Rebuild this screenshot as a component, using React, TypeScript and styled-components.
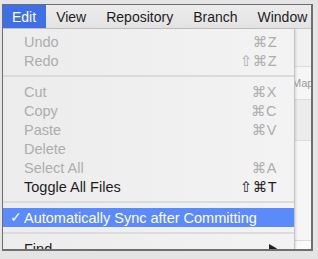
import React from 'react';
import styled, { createGlobalStyle } from 'styled-components';

type Item =
  | { kind: 'item'; label: string; shortcut?: string; disabled?: boolean; checked?: boolean; active?: boolean; submenu?: boolean }
  | { kind: 'sep' };

const items: Item[] = [
  { kind: 'item', label: 'Undo', shortcut: '⌘Z', disabled: true },
  { kind: 'item', label: 'Redo', shortcut: '⇧⌘Z', disabled: true },
  { kind: 'sep' },
  { kind: 'item', label: 'Cut', shortcut: '⌘X', disabled: true },
  { kind: 'item', label: 'Copy', shortcut: '⌘C', disabled: true },
  { kind: 'item', label: 'Paste', shortcut: '⌘V', disabled: true },
  { kind: 'item', label: 'Delete', disabled: true },
  { kind: 'item', label: 'Select All', shortcut: '⌘A', disabled: true },
  { kind: 'item', label: 'Toggle All Files', shortcut: '⇧⌘T' },
  { kind: 'sep' },
  { kind: 'item', label: 'Automatically Sync after Committing', checked: true, active: true },
  { kind: 'sep' },
  { kind: 'item', label: 'Find', submenu: true },
];

const menus = ['Edit', 'View', 'Repository', 'Branch', 'Window'];

const App: React.FC = () => {
  return (
    <>
      <GlobalStyle />
      <Frame>
        <MenuBar>
          {menus.map((m, i) => (
            <MenuTitle key={m} $open={i === 0}>{m}</MenuTitle>
          ))}
        </MenuBar>
        <Body>
          <Dropdown>
            {items.map((it, i) =>
              it.kind === 'sep' ? (
                <Separator key={i} />
              ) : (
                <Row key={i} $disabled={it.disabled} $active={it.active}>
                  <Check>{it.checked ? '✓' : ''}</Check>
                  <Label>{it.label}</Label>
                  {it.shortcut && <Shortcut>{it.shortcut}</Shortcut>}
                  {it.submenu && (
                    <svg width="8" height="9" viewBox="0 0 8 9">
                      <path d="M0 0 L8 4.5 L0 9 Z" fill="#222" />
                    </svg>
                  )}
                </Row>
              )
            )}
          </Dropdown>
          <AppPeek>
            <PeekBand $h={37} $bg="#f1f1f1" />
            <PeekBand $h={32} $bg="#f6f6f6">
              <PeekText>Map</PeekText>
            </PeekBand>
            <PeekBand $h={40} $bg="#ececec" />
            <PeekBand $h={99} $bg="#f6f6f6" />
            <PeekBand $h={20} $bg="#fbfbfb" $noBorder />
          </AppPeek>
        </Body>
      </Frame>
    </>
  );
};

const GlobalStyle = createGlobalStyle`
  html, body {
    margin: 0;
    padding: 0;
    background: #e4e4e4;
  }
  body {
    font-family: "Liberation Sans", Arial, "DejaVu Sans", sans-serif;
    -webkit-font-smoothing: antialiased;
  }
`;

const Frame = styled.div`
  margin: 4px 0 0 2px;
  width: 311px;
  height: 247px;
  box-sizing: border-box;
  border: 1px solid #6f6f6f;
  border-right-width: 2px;
  border-bottom-width: 2px;
  display: flex;
  flex-direction: column;
  overflow: hidden;
  background: #f4f4f4;
`;

const MenuBar = styled.div`
  height: 23px;
  flex: none;
  display: flex;
  align-items: stretch;
  background: linear-gradient(#ececec, #e3e3e3);
  border-bottom: 1px solid #c6c6c6;
  margin-left: -1px;
`;

const MenuTitle = styled.div<{ $open?: boolean }>`
  display: flex;
  align-items: center;
  padding: 0 10px;
  font-size: 14px;
  color: ${p => (p.$open ? '#fff' : '#1e1e1e')};
  background: ${p => (p.$open ? '#3f6fe6' : 'transparent')};
  white-space: nowrap;
`;

const Body = styled.div`
  flex: 1;
  display: flex;
  min-height: 0;
`;

const Dropdown = styled.div`
  width: 291px;
  flex: none;
  padding-top: 3px;
  background: linear-gradient(90deg, #ececec, #f3f3f3);
  border-right: 1px solid #c4c4c4;
  box-shadow: 1px 0 2px rgba(0, 0, 0, 0.12);
  position: relative;
  z-index: 1;
`;

const Row = styled.div<{ $disabled?: boolean; $active?: boolean }>`
  height: 19px;
  display: flex;
  align-items: center;
  padding: 0 17px 0 3px;
  font-size: 14.5px;
  color: ${p => (p.$active ? '#fff' : p.$disabled ? '#adadad' : '#1e1e1e')};
  background: ${p => (p.$active ? '#5b8afa' : 'transparent')};
`;

const Check = styled.span`
  width: 18px;
  flex: none;
  padding-left: 4px;
  box-sizing: border-box;
  font-family: "DejaVu Sans", sans-serif;
  font-size: 14px;
  line-height: 19px;
  font-weight: bold;
  white-space: nowrap;
`;

const Label = styled.span`
  flex: 1;
  white-space: nowrap;
`;

const Shortcut = styled.span`
  font-family: "Liberation Sans", "DejaVu Sans", sans-serif;
  font-size: 14.5px;
  letter-spacing: 0.5px;
`;

const Separator = styled.div`
  height: 2px;
  margin: 5px 0;
  background: #dbdbdb;
`;

const AppPeek = styled.div`
  flex: 1;
  display: flex;
  flex-direction: column;
  overflow: hidden;
`;

const PeekBand = styled.div<{ $h: number; $bg: string; $noBorder?: boolean }>`
  height: ${p => p.$h}px;
  flex: none;
  background: ${p => p.$bg};
  border-bottom: ${p => (p.$noBorder ? 'none' : '1px solid #dcdcdc')};
  display: flex;
  align-items: center;
  overflow: hidden;
`;

const PeekText = styled.span`
  font-size: 11px;
  color: #9a9a9a;
  margin-left: -3px;
`;

export default App;
